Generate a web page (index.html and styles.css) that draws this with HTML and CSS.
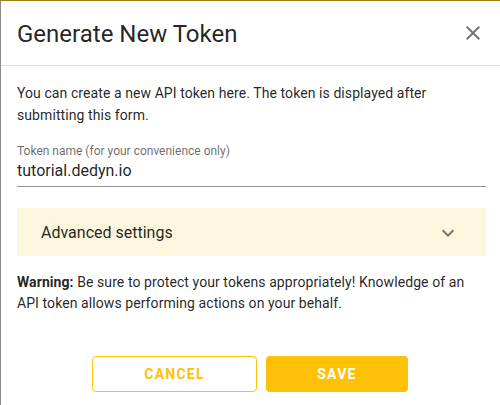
FILE: index.html
```html
<!DOCTYPE html>
<html>
<head>
<meta charset="utf-8">
<link rel="stylesheet" href="styles.css">
</head>
<body>
<div class="dialog">
  <header class="head">
    <h1 class="title">Generate New Token</h1>
    <button class="close" aria-label="Close">
      <svg width="24" height="24" viewBox="0 0 24 24"><path d="M19 6.41L17.59 5 12 10.59 6.41 5 5 6.41 10.59 12 5 17.59 6.41 19 12 13.41 17.59 19 19 17.59 13.41 12z" fill="#757575"/></svg>
    </button>
  </header>
  <div class="body">
    <p class="intro">You can create a new API token here. The token is displayed after submitting this form.</p>
    <div class="field">
      <label class="label">Token name (for your convenience only)</label>
      <div class="value">tutorial.dedyn.io</div>
    </div>
    <div class="panel">
      <span>Advanced settings</span>
      <svg class="chev" width="24" height="24" viewBox="0 0 24 24"><path d="M7.41 8.58L12 13.17l4.59-4.59L18 10l-6 6-6-6 1.41-1.42z" fill="#757575"/></svg>
    </div>
    <p class="warn"><b>Warning:</b> Be sure to protect your tokens appropriately! Knowledge of an API token allows performing actions on your behalf.</p>
  </div>
  <div class="actions">
    <button class="btn outline">CANCEL</button>
    <button class="btn filled">SAVE</button>
  </div>
</div>
</body>
</html>
```
FILE: styles.css
```css
html, body {
  margin: 0;
  padding: 0;
  background: #fff;
}
body {
  font-family: Roboto, "Liberation Sans", sans-serif;
  color: rgba(0,0,0,0.87);
}
.dialog {
  width: 499px;
  height: 404px;
  border-left: 1px solid #8c8c8c;
  border-top: 1px solid #a07c10;
  background: #fff;
  overflow: hidden;
}
.head {
  height: 64px;
  display: flex;
  align-items: center;
  justify-content: space-between;
  padding: 0 15px 0 16px;
  border-bottom: 1px solid #dcdcdc;
}
.title {
  margin: 0;
  font-size: 24px;
  font-weight: 400;
  letter-spacing: 0;
  color: rgba(0,0,0,0.87);
  padding-top: 1px;
}
.close {
  border: 0;
  background: none;
  padding: 0;
  width: 24px;
  height: 24px;
}
.body {
  padding: 16px 14px 0 16px;
}
.intro {
  margin: 0;
  font-size: 14px;
  line-height: 22px;
  letter-spacing: 0.08px;
}
.field {
  margin-top: 17px;
  border-bottom: 1px solid #949494;
  padding-bottom: 4px;
}
.label {
  display: block;
  font-size: 12px;
  line-height: 16px;
  color: rgba(0,0,0,0.6);
}
.value {
  font-size: 16px;
  line-height: 22px;
  margin-top: 1px;
}
.panel {
  margin-top: 21px;
  height: 48px;
  background: #fdf6de;
  display: flex;
  align-items: center;
  justify-content: space-between;
  padding: 0 26px 0 24px;
  font-size: 16px;
}
.chev {
  margin-top: 2px;
}
.warn {
  margin: 16px 0 0;
  font-size: 14px;
  line-height: 21px;
  letter-spacing: 0.08px;
}
.warn b {
  font-weight: 700;
}
.actions {
  display: flex;
  justify-content: center;
  gap: 9px;
  margin-top: 42px;
  padding-right: 1px;
}
.btn {
  height: 36px;
  border-radius: 4px;
  font-family: Roboto, "Liberation Sans", sans-serif;
  font-size: 14px;
  font-weight: 700;
  letter-spacing: 1.25px;
  cursor: pointer;
}
.outline {
  width: 165px;
  background: #fff;
  border: 1px solid #ffc107;
  color: #ffc107;
}
.filled {
  width: 142px;
  background: #ffc107;
  border: 0;
  color: #fff;
}
```
